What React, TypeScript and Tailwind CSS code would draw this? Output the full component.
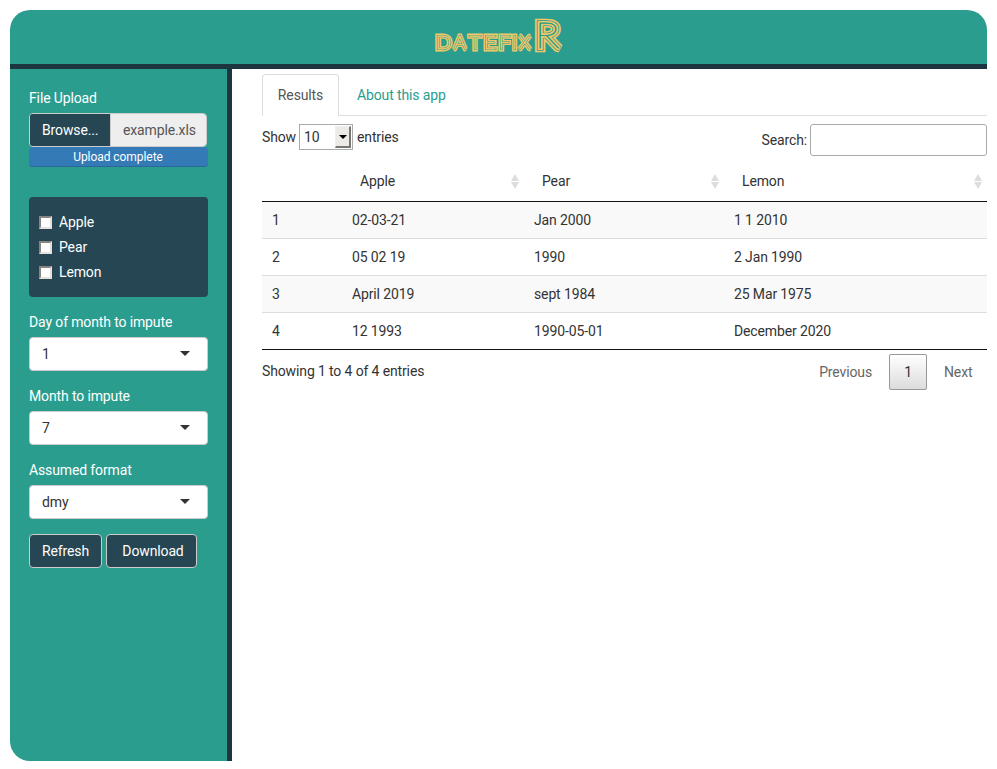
import type { ReactNode } from "react";

const rows = [
  ["1", "02-03-21", "Jan 2000", "1 1 2010"],
  ["2", "05 02 19", "1990", "2 Jan 1990"],
  ["3", "April 2019", "sept 1984", "25 Mar 1975"],
  ["4", "12 1993", "1990-05-01", "December 2020"],
];

// Each pass strokes the wordmark a little thinner, giving the neon-tube lettering.
const passes = [
  { colour: "#f0c868", small: 4.9, large: 8.4 },
  { colour: "#2a9d8f", small: 2, large: 5.4 },
  { colour: "#f0c868", small: 1, large: 4 },
  { colour: "#2a9d8f", small: 0, large: 0.8 },
];

// The glyph, the centre of its stems' span, and how far it is widened.
const letters: [string, number, number][] = [
  ["D", 10.2, 1.12],
  ["A", 26.6, 1],
  ["T", 41.8, 1.06],
  ["E", 57, 1.15],
  ["F", 71.4, 1.08],
  ["I", 81.6, 1],
  ["X", 91.7, 1.02],
];

function Logo() {
  return (
    <svg width="132" height="48" viewBox="0 -4 132 48" className="block overflow-visible tracking-normal" fontFamily="Lato, sans-serif" fontWeight={100} strokeLinejoin="miter" strokeMiterlimit={1.6}>
      {passes.map((p, i) => (
        <g key={i} fill={p.colour} stroke={p.colour} textAnchor="middle">
          {p.small > 0 &&
            letters.map(([glyph, x, sx]) => (
              <text key={glyph} transform={`translate(${x} 33.3) scale(${sx} 1)`} fontSize="18.4" strokeWidth={p.small}>
                {glyph}
              </text>
            ))}
          <text transform="translate(114.1 31.8) scale(1.16 1)" fontSize="35.5" strokeWidth={p.large}>
            R
          </text>
        </g>
      ))}
    </svg>
  );
}

function Field({ label, value }: { label: string; value: string }) {
  return (
    <div className="mb-[15px]">
      <div className="mb-[5px] h-5 text-white">{label}</div>
      <div className="flex h-[34px] items-center justify-between rounded border border-[#ccc] bg-white pl-3 pr-[17px]">
        <span>{value}</span>
        <span className="mb-0.5 border-x-5 border-t-5 border-x-transparent border-t-[#333]" />
      </div>
    </div>
  );
}

function Check({ label }: { label: string }) {
  return (
    <div className="flex h-[25px] items-center">
      <span className="mr-[7px] mt-px size-[13px] border-2 border-b-[#e6e0dc] border-l-[#8c8480] border-r-[#e6e0dc] border-t-[#8c8480] bg-white" />
      {label}
    </div>
  );
}

function Head({ children }: { children: ReactNode }) {
  return (
    <th className="h-10 p-0 pl-[18px] pr-[5.5px] text-left font-normal">
      <div className="flex items-center justify-between">
        {children}
        <span className="mt-px flex flex-col gap-px">
          <span className="border-x-4 border-b-[7px] border-x-transparent border-b-[#ddd]" />
          <span className="border-x-4 border-t-[7px] border-x-transparent border-t-[#ddd]" />
        </span>
      </div>
    </th>
  );
}

export default function App() {
  return (
    <div className="flex h-[769px] w-[997px] flex-col overflow-hidden bg-white px-2.5 pb-2 pt-2.5 font-['Roboto',sans-serif] text-[14px] leading-5 tracking-[-0.13px] text-[#333]">
      <header className="flex h-[59px] shrink-0 justify-center rounded-t-[20px] border-b-5 border-[#1c353e] bg-[#2a9d8f] pt-0.5">
        <Logo />
      </header>
      <div className="flex min-h-0 flex-1">
        <aside className="w-[222px] shrink-0 rounded-bl-[20px] border-r-5 border-[#1c353e] bg-[#2a9d8f] pl-[19px] pr-[19px] pt-[19px]">
          <div className="mb-[5px] h-5 text-white">File Upload</div>
          <div className="flex h-[34px] w-[178px] overflow-hidden rounded border border-[#ccc]">
            <div className="flex w-[81px] items-center border-r border-[#ccc] bg-[#264653] pl-3 text-white">Browse...</div>
            <div className="flex flex-1 items-center bg-[#eee] pl-3 text-[#555]">example.xls</div>
          </div>
          <div className="h-5 w-[179px] rounded bg-[#337ab7] pr-px text-center text-[12px] tracking-[-0.06px] text-white shadow-[inset_0_-1px_0_rgba(0,0,0,.15)]">Upload complete</div>
          <div className="mb-[15px] mt-[30px] h-[100px] rounded bg-[#264653] px-2.5 pt-3 text-white">
            <Check label="Apple" />
            <Check label="Pear" />
            <Check label="Lemon" />
          </div>
          <Field label="Day of month to impute" value="1" />
          <Field label="Month to impute" value="7" />
          <Field label="Assumed format" value="dmy" />
          <div className="flex gap-1 text-white">
            <button className="h-[34px] w-[73px] rounded border border-[#ccc] bg-[#264653]">Refresh</button>
            <button className="h-[34px] w-[91px] rounded border border-[#ccc] bg-[#264653] pl-[3px]">Download</button>
          </div>
        </aside>
        <main className="ml-[30px] flex-1 pt-[5px]">
          <div className="flex h-[42px] border-b border-[#ddd]">
            <div className="h-[42px] w-[77px] rounded-t border border-b-0 border-[#ddd] bg-white pt-2.5 text-center text-[#555]">Results</div>
            <div className="ml-[18px] pt-[11px] text-[#2a9d8f]">About this app</div>
          </div>
          <div className="flex h-[45px] items-start justify-between pt-2">
            <div className="flex items-center">
              <span className="w-[37px]">Show</span>
              <div className="mr-1 flex h-[26px] w-[54px] items-center justify-between border border-[#aaa] pl-1 pr-px">
                <span>10</span>
                <span className="flex h-[22px] w-4 items-center justify-center border-b-2 border-l border-r-2 border-t border-b-[#777] border-l-[#eee] border-r-[#777] border-t-[#eee] bg-[#eeebe7]">
                  <span className="border-x-4 border-t-4 border-x-transparent border-t-black" />
                </span>
              </div>
              <span>entries</span>
            </div>
            <div className="flex items-center">
              <span>Search:</span>
              <div className="ml-[3px] h-8 w-[177px] rounded-[3px] border border-[#aaa]" />
            </div>
          </div>
          <table className="w-[725px] table-fixed border-collapse">
            <colgroup>
              <col className="w-[80px]" />
              <col className="w-[182px]" />
              <col className="w-[200px]" />
              <col className="w-[263px]" />
            </colgroup>
            <thead>
              <tr className="h-10 border-b border-[#111]">
                <th className="p-0" />
                <Head>Apple</Head>
                <Head>Pear</Head>
                <Head>Lemon</Head>
              </tr>
            </thead>
            <tbody>
              {rows.map((row) => (
                <tr key={row[0]} className="h-[37px] border-b border-[#ddd] odd:bg-[#f9f9f9] last:border-[#111]">
                  {row.map((cell, i) => (
                    <td key={i} className="p-0 pl-2.5">{cell}</td>
                  ))}
                </tr>
              ))}
            </tbody>
          </table>
          <div className="flex justify-between">
            <div className="pt-[11px]">Showing 1 to 4 of 4 entries</div>
            <div className="flex items-center pt-1 text-[#666]">
              <span>Previous</span>
              <span className="ml-[17px] mr-[17px] flex h-9 w-[38px] items-center justify-center rounded-[2px] border border-[#979797] bg-linear-to-b from-white to-[#dcdcdc] text-[#333]">1</span>
              <span className="w-[43px]">Next</span>
            </div>
          </div>
        </main>
      </div>
    </div>
  );
}
